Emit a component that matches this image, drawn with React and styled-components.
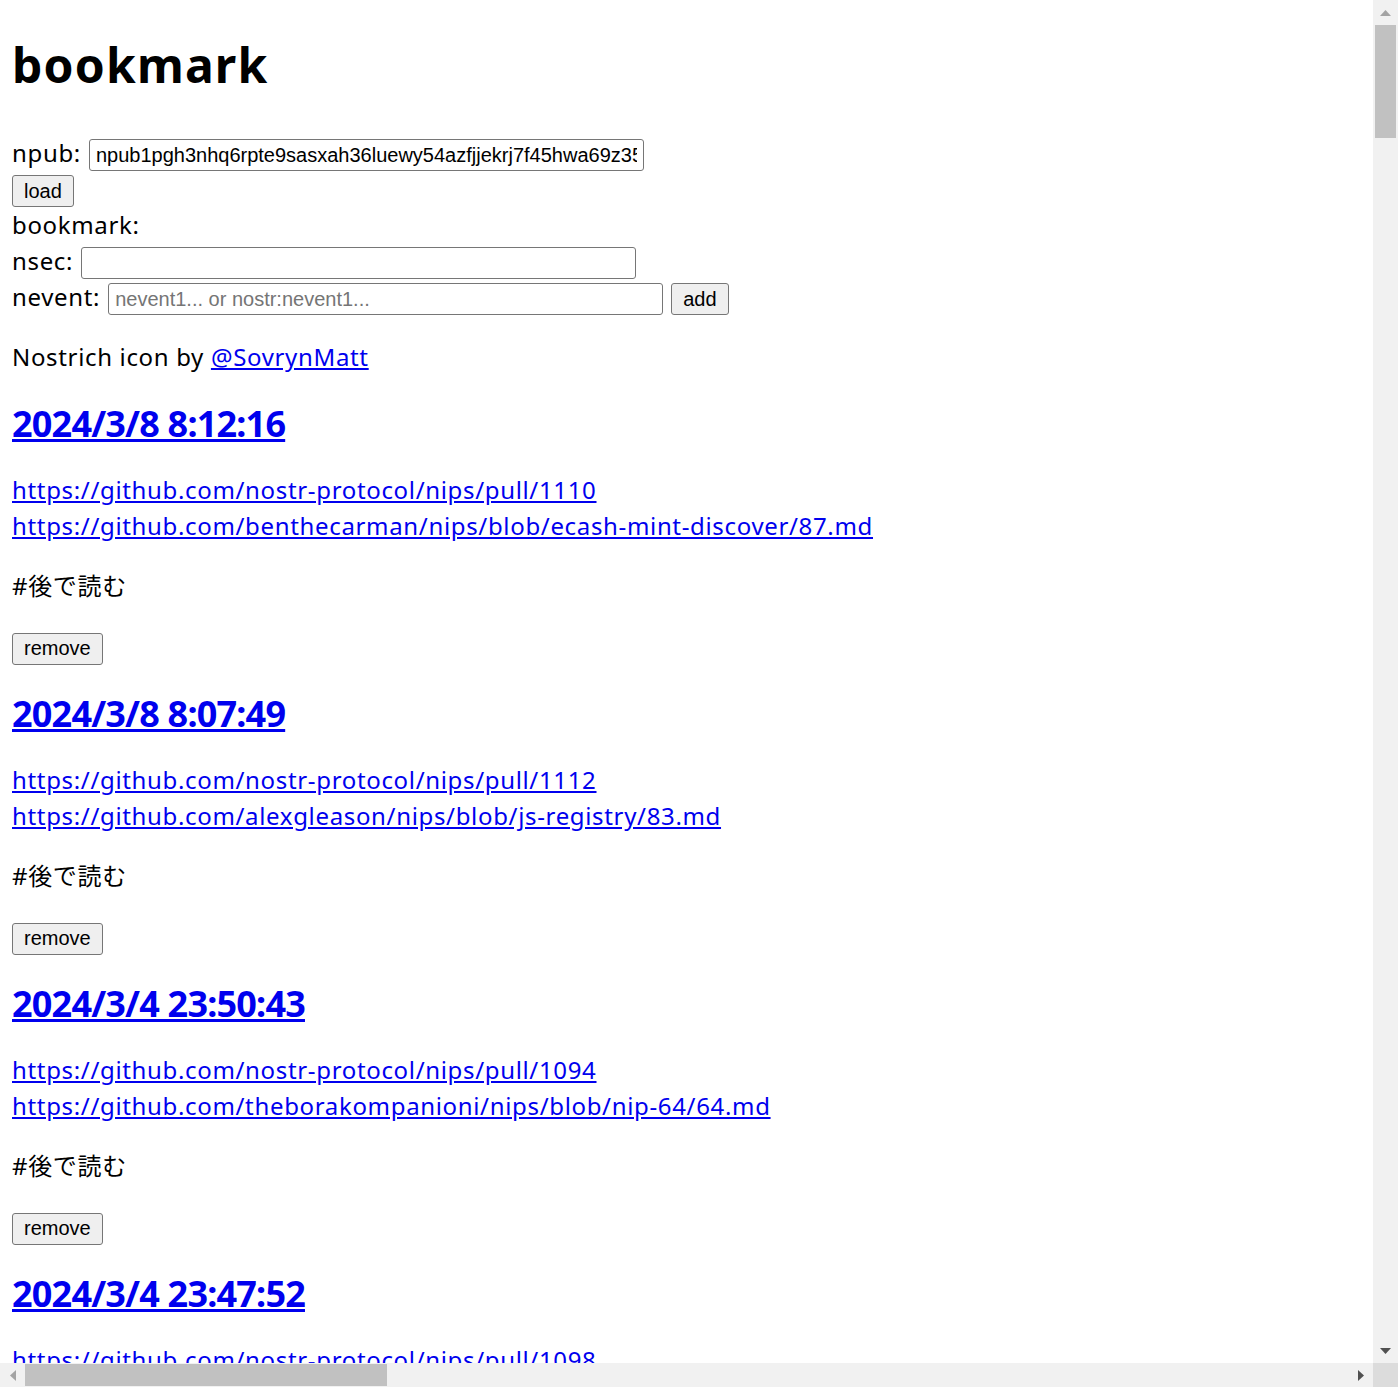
import styled, { createGlobalStyle } from "styled-components";

const GlobalStyle = createGlobalStyle`
  html, body {
    margin: 0;
    padding: 0;
    overflow: hidden;
    background: #fff;
  }
`;

// window frame: page area plus the browser's scrollbars
const Frame = styled.div`
  width: 100vw;
  height: 100vh;
  display: grid;
  grid-template-columns: 1fr 25px;
  grid-template-rows: 1fr 24px;
`;

const Viewport = styled.div`
  overflow: hidden;
  font-family: "Noto Sans", "Noto Sans CJK JP", sans-serif;
  font-size: 24px;
  line-height: 36px;
  letter-spacing: 0.66px;
  color: #000;
`;

const VBar = styled.div`
  background: #f1f1f1;
  display: flex;
  flex-direction: column;
`;

const HBar = styled.div`
  background: #f1f1f1;
  display: flex;
`;

const Corner = styled.div`
  background: #dcdcdc;
`;

const Arrow = styled.div`
  flex: none;
  width: 25px;
  height: ${(p) => (p.$horizontal ? "24px" : "25px")};
  display: flex;
  align-items: center;
  justify-content: center;
`;

const Track = styled.div`
  flex: 1;
  display: flex;
  flex-direction: ${(p) => (p.$horizontal ? "row" : "column")};
`;

const Thumb = styled.div`
  background: #c1c1c1;
  ${(p) =>
    p.$horizontal
      ? "width: 362px; margin: 1px 0;"
      : "height: 113px; margin: 0 2px;"}
`;

const Tri = ({ dir, color }) => {
  const pts = {
    up: "0,6 5.5,0 11,6",
    down: "0,0 11,0 5.5,6",
    left: "6,0 6,11 0,5.5",
    right: "0,0 0,11 6,5.5",
  }[dir];
  const vertical = dir === "up" || dir === "down";
  return (
    <svg width={vertical ? 11 : 6} height={vertical ? 6 : 11}>
      <polygon points={pts} fill={color} />
    </svg>
  );
};

const Page = styled.div`
  padding: 0 12px;
`;

const Title = styled.h1`
  font-size: 48px;
  font-weight: 700;
  line-height: 66px;
  letter-spacing: 1.2px;
  margin: 32px 0 39px;
`;

const Row = styled.div`
  display: flex;
  align-items: center;
  gap: 8px;
  height: 36px;
`;

const Label = styled.span`
  position: relative;
  top: -2px;
`;

const Line = styled.div`
  height: 36px;
  display: flex;
  align-items: center;
`;

const TextInput = styled.input`
  box-sizing: border-box;
  width: 555px;
  height: 32px;
  padding: 0 6px;
  border: 1px solid #767676;
  border-radius: 3px;
  font-family: "Liberation Sans", Arial, sans-serif;
  font-size: 20px;
  letter-spacing: 0;
  color: #000;
  background: #fff;
  outline: none;
  &::placeholder {
    color: #757575;
  }
`;

const Button = styled.button`
  box-sizing: border-box;
  height: 32px;
  padding: 0 11px;
  border: 1px solid #767676;
  border-radius: 3px;
  background: #efefef;
  font-family: "Liberation Sans", Arial, sans-serif;
  font-size: 20px;
  letter-spacing: 0;
  color: #000;
  cursor: pointer;
`;

const Para = styled.p`
  margin: ${(p) => p.$margin || "24px 0"};
`;

const Link = styled.a`
  color: #0000ee;
  text-decoration: underline;
`;

const EntryTitle = styled.h2`
  font-size: 36px;
  font-weight: 700;
  line-height: 43px;
  letter-spacing: -0.8px;
  margin: 27px 0 27px;
`;

const ButtonLine = styled.div`
  height: 37px;
`;

const entries = [
  {
    date: "2024/3/8 8:12:16",
    links: [
      "https://github.com/nostr-protocol/nips/pull/1110",
      "https://github.com/benthecarman/nips/blob/ecash-mint-discover/87.md",
    ],
    tag: "#後で読む",
  },
  {
    date: "2024/3/8 8:07:49",
    links: [
      "https://github.com/nostr-protocol/nips/pull/1112",
      "https://github.com/alexgleason/nips/blob/js-registry/83.md",
    ],
    tag: "#後で読む",
  },
  {
    date: "2024/3/4 23:50:43",
    links: [
      "https://github.com/nostr-protocol/nips/pull/1094",
      "https://github.com/theborakompanioni/nips/blob/nip-64/64.md",
    ],
    tag: "#後で読む",
  },
  {
    date: "2024/3/4 23:47:52",
    links: ["https://github.com/nostr-protocol/nips/pull/1098"],
    tag: "#後で読む",
  },
];

const Entry = ({ date, links, tag }) => (
  <section>
    <EntryTitle>
      <Link href="#">{date}</Link>
    </EntryTitle>
    <Para>
      {links.map((l, i) => (
        <span key={l}>
          {i > 0 && <br />}
          <Link href={l}>{l}</Link>
        </span>
      ))}
    </Para>
    <Para>{tag}</Para>
    <ButtonLine>
      <Button>remove</Button>
    </ButtonLine>
  </section>
);

export default function App() {
  return (
    <>
      <GlobalStyle />
      <Frame>
        <Viewport>
          <Page>
            <Title>bookmark</Title>
            <Row>
              <Label>npub:</Label>
              <TextInput defaultValue="npub1pgh3nhq6rpte9sasxah36luewy54azfjjekrj7f45hwa69z35" />
            </Row>
            <Line>
              <Button>load</Button>
            </Line>
            <Line>
              <Label>bookmark:</Label>
            </Line>
            <Row>
              <Label>nsec:</Label>
              <TextInput />
            </Row>
            <Row>
              <Label>nevent:</Label>
              <TextInput placeholder="nevent1... or nostr:nevent1..." />
              <Button>add</Button>
            </Row>
            <Para $margin="22px 0 0">
              Nostrich icon by <Link href="#">@SovrynMatt</Link>
            </Para>
            {entries.map((e) => (
              <Entry key={e.date} {...e} />
            ))}
          </Page>
        </Viewport>
        <VBar>
          <Arrow>
            <Tri dir="up" color="#a3a3a3" />
          </Arrow>
          <Track>
            <Thumb />
          </Track>
          <Arrow>
            <Tri dir="down" color="#505050" />
          </Arrow>
        </VBar>
        <HBar>
          <Arrow $horizontal>
            <Tri dir="left" color="#a3a3a3" />
          </Arrow>
          <Track $horizontal>
            <Thumb $horizontal />
          </Track>
          <Arrow $horizontal>
            <Tri dir="right" color="#505050" />
          </Arrow>
        </HBar>
        <Corner />
      </Frame>
    </>
  );
}
